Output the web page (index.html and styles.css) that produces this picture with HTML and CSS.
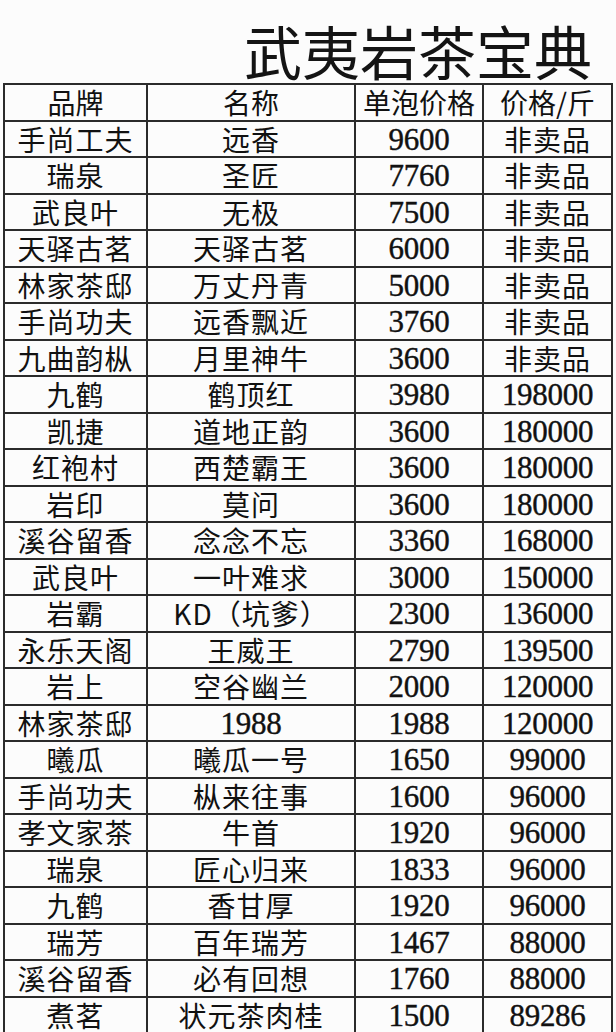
FILE: index.html
```html
<!DOCTYPE html>
<html lang="zh">
<head>
<meta charset="utf-8">
<title>武夷岩茶宝典</title>
<link rel="stylesheet" href="styles.css">
</head>
<body>
<div class="page">
  <header class="title-bar">
    <h1 class="title">武夷岩茶宝典</h1>
  </header>
  <div class="grid">
    <div class="cell head">品牌</div><div class="cell head">名称</div><div class="cell head">单泡价格</div><div class="cell head">价格/斤</div>

    <div class="cell">手尚工夫</div><div class="cell">远香</div><div class="cell num">9600</div><div class="cell">非卖品</div>
    <div class="cell">瑞泉</div><div class="cell">圣匠</div><div class="cell num">7760</div><div class="cell">非卖品</div>
    <div class="cell">武良叶</div><div class="cell">无极</div><div class="cell num">7500</div><div class="cell">非卖品</div>
    <div class="cell">天驿古茗</div><div class="cell">天驿古茗</div><div class="cell num">6000</div><div class="cell">非卖品</div>
    <div class="cell">林家茶邸</div><div class="cell">万丈丹青</div><div class="cell num">5000</div><div class="cell">非卖品</div>
    <div class="cell">手尚功夫</div><div class="cell">远香飘近</div><div class="cell num">3760</div><div class="cell">非卖品</div>
    <div class="cell">九曲韵枞</div><div class="cell">月里神牛</div><div class="cell num">3600</div><div class="cell">非卖品</div>
    <div class="cell">九鹤</div><div class="cell">鹤顶红</div><div class="cell num">3980</div><div class="cell num">198000</div>
    <div class="cell">凯捷</div><div class="cell">道地正韵</div><div class="cell num">3600</div><div class="cell num">180000</div>
    <div class="cell">红袍村</div><div class="cell">西楚霸王</div><div class="cell num">3600</div><div class="cell num">180000</div>
    <div class="cell">岩印</div><div class="cell">莫问</div><div class="cell num">3600</div><div class="cell num">180000</div>
    <div class="cell">溪谷留香</div><div class="cell">念念不忘</div><div class="cell num">3360</div><div class="cell num">168000</div>
    <div class="cell">武良叶</div><div class="cell">一叶难求</div><div class="cell num">3000</div><div class="cell num">150000</div>
    <div class="cell">岩霸</div><div class="cell">KD（坑爹）</div><div class="cell num">2300</div><div class="cell num">136000</div>
    <div class="cell">永乐天阁</div><div class="cell">王威王</div><div class="cell num">2790</div><div class="cell num">139500</div>
    <div class="cell">岩上</div><div class="cell">空谷幽兰</div><div class="cell num">2000</div><div class="cell num">120000</div>
    <div class="cell">林家茶邸</div><div class="cell num">1988</div><div class="cell num">1988</div><div class="cell num">120000</div>
    <div class="cell">曦瓜</div><div class="cell">曦瓜一号</div><div class="cell num">1650</div><div class="cell num">99000</div>
    <div class="cell">手尚功夫</div><div class="cell">枞来往事</div><div class="cell num">1600</div><div class="cell num">96000</div>
    <div class="cell">孝文家茶</div><div class="cell">牛首</div><div class="cell num">1920</div><div class="cell num">96000</div>
    <div class="cell">瑞泉</div><div class="cell">匠心归来</div><div class="cell num">1833</div><div class="cell num">96000</div>
    <div class="cell">九鹤</div><div class="cell">香甘厚</div><div class="cell num">1920</div><div class="cell num">96000</div>
    <div class="cell">瑞芳</div><div class="cell">百年瑞芳</div><div class="cell num">1467</div><div class="cell num">88000</div>
    <div class="cell">溪谷留香</div><div class="cell">必有回想</div><div class="cell num">1760</div><div class="cell num">88000</div>
    <div class="cell">煮茗</div><div class="cell">状元茶肉桂</div><div class="cell num">1500</div><div class="cell num">89286</div>
  </div>
</div>
</body>
</html>
```

FILE: styles.css
```css
* {
  box-sizing: border-box;
}

html, body {
  margin: 0;
  padding: 0;
  background: #fcfcfc;
}

body {
  font-family: "Noto Sans CJK SC", "Noto Sans", sans-serif;
  color: #111;
}

.page {
  width: 616px;
}

.title-bar {
  height: 83px;
  display: flex;
  justify-content: flex-end;
  align-items: flex-end;
  padding: 0 24px 3px 0;
}

.title {
  margin: 0;
  font-size: 58px;
  line-height: 60px;
  font-weight: 400;
  color: #141414;
  letter-spacing: 0;
}

.grid {
  margin-left: 3px;
  width: 610px;
  display: grid;
  grid-template-columns: 141px 206px 126px 127px;
  grid-auto-rows: 34.5px;
  gap: 2px;
  padding: 2px;
  background: #2b2b2b;
}

.cell {
  background: #fcfcfc;
  display: flex;
  align-items: center;
  justify-content: center;
  font-size: 28px;
  line-height: 34px;
  letter-spacing: 1px;
  white-space: nowrap;
}

.head {
  letter-spacing: 0;
}

.num {
  font-family: "Liberation Serif", "Times New Roman", serif;
  font-size: 31px;
  line-height: 34px;
  letter-spacing: -0.3px;
  padding-top: 2px;
  -webkit-text-stroke: 0.4px #111;
}
```
